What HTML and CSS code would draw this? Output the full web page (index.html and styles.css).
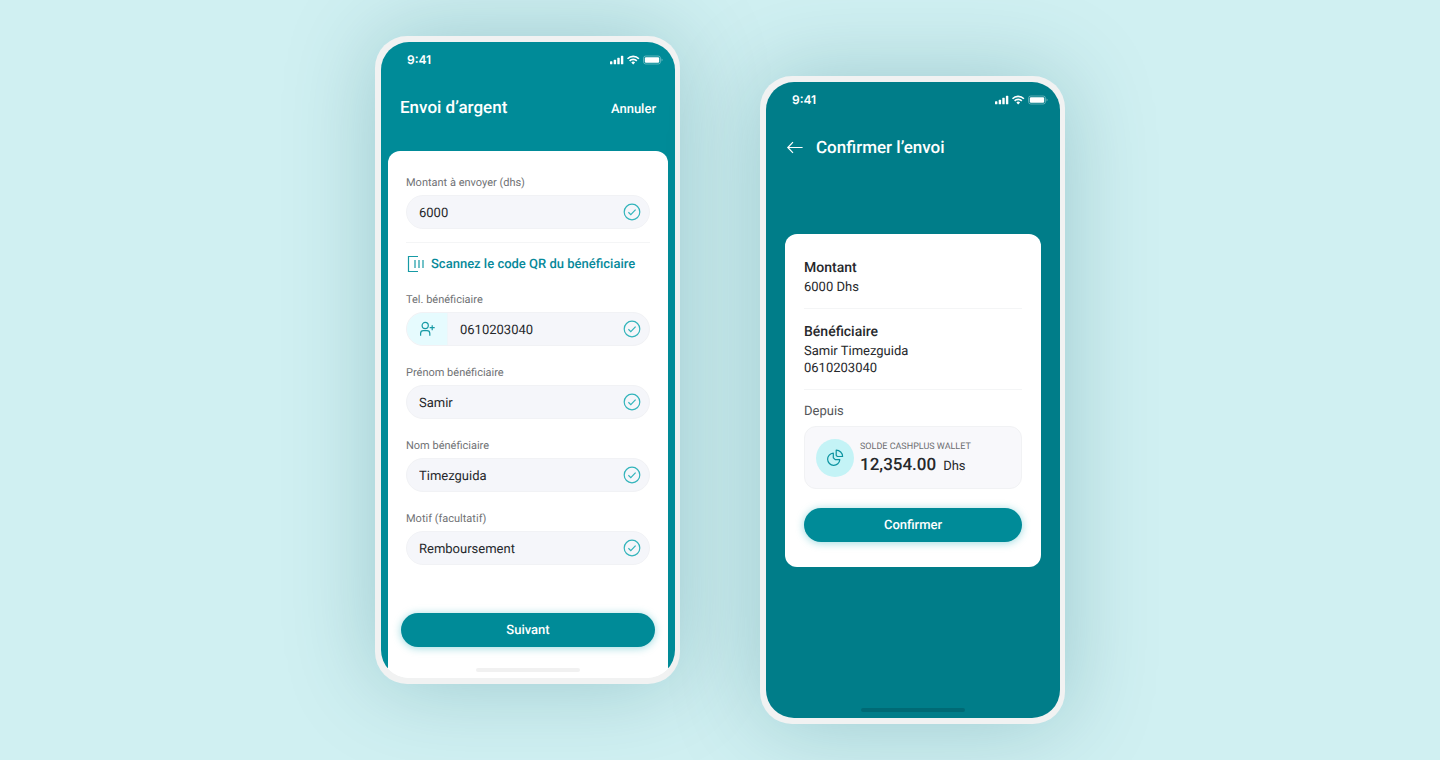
FILE: index.html
```html
<!DOCTYPE html>
<html lang="fr">
<head>
<meta charset="utf-8">
<meta name="viewport" content="width=device-width, initial-scale=1">
<title>Envoi d’argent</title>
<link rel="stylesheet" href="styles.css">
</head>
<body>
<svg class="sprite" aria-hidden="true">
  <symbol id="check" viewBox="0 0 18 18"><circle cx="9" cy="9" r="7.8"/><path d="M5.4 9.3l2.4 2.3 4.8-5"/></symbol>
  <symbol id="status" viewBox="0 0 54 12">
    <g fill="#fff"><rect x="1" y="7.3" width="2.4" height="3" rx=".6"/><rect x="4.7" y="5.8" width="2.4" height="4.5" rx=".6"/><rect x="8.3" y="3.8" width="2.4" height="6.5" rx=".6"/><rect x="11.9" y="1.8" width="2.4" height="8.5" rx=".6"/></g>
    <g fill="none" stroke="#fff" stroke-width="1.6"><path d="M18.5 4.7a8.1 8.1 0 0 1 11.4 0"/><path d="M20.6 6.9a5.1 5.1 0 0 1 7.2 0"/></g>
    <path d="M22.3 8.5a2.8 2.8 0 0 1 3.8 0l-1.9 2z" fill="#fff"/>
    <rect x="34.5" y="2" width="17" height="8" rx="2.3" fill="none" stroke="#fff" stroke-opacity=".35"/>
    <rect x="35.8" y="3.2" width="14.4" height="5.6" rx="1.2" fill="#fff"/><path d="M52.6 4.6c1.2.4 1.2 2.4 0 2.8z" fill="#fff" fill-opacity=".5"/>
  </symbol>
</svg>
<main class="stage">
  <section class="phone">
    <div class="screen screen-send">
      <div class="statusbar"><span>9:41</span><svg class="status-icons"><use href="#status"/></svg></div>
      <header class="header"><h1>Envoi d’argent</h1><button class="cancel" type="button">Annuler</button></header>
      <form class="sheet">
        <div class="fields">
          <div class="field"><label for="amount">Montant à envoyer (dhs)</label>
            <div class="control"><input id="amount" value="6000"><svg class="check"><use href="#check"/></svg></div></div>
          <hr class="rule">
          <button class="scan" type="button">
            <svg class="scan-icon" viewBox="0 0 18 18"><path d="M12 1.5H2.5v15H12M9 5v8M13 5v8M17 5v8"/></svg>
            Scannez le code QR du bénéficiaire</button>
          <div class="field"><label for="phone">Tel. bénéficiaire</label>
            <div class="control"><button class="contact" type="button" aria-label="Choisir un contact"><svg viewBox="0 0 18 18"><circle cx="7.2" cy="5.5" r="3.1"/><path d="M2.6 15.7v-2.2a2.8 2.8 0 0 1 2.8-2.8H9a2.8 2.8 0 0 1 2.8 2.8v2.2M14.2 5.2v5M11.7 7.7h5"/></svg></button><input id="phone" type="tel" value="0610203040"><svg class="check"><use href="#check"/></svg></div></div>
          <div class="field"><label for="first">Prénom bénéficiaire</label>
            <div class="control"><input id="first" value="Samir"><svg class="check"><use href="#check"/></svg></div></div>
          <div class="field"><label for="last">Nom bénéficiaire</label>
            <div class="control"><input id="last" value="Timezguida"><svg class="check"><use href="#check"/></svg></div></div>
          <div class="field"><label for="reason">Motif (facultatif)</label>
            <div class="control"><input id="reason" value="Remboursement"><svg class="check"><use href="#check"/></svg></div></div>
        </div>
        <div class="actions"><button class="primary" type="button">Suivant</button></div>
        <div class="homebar"></div>
      </form>
    </div>
  </section>
  <section class="phone phone-low">
    <div class="screen screen-confirm">
      <div class="statusbar"><span>9:41</span><svg class="status-icons"><use href="#status"/></svg></div>
      <header class="header header-back"><button class="back" type="button" aria-label="Retour"><svg viewBox="0 0 18 18"><path d="M16.6 8.5H2M7 3.1L1.8 8.5 7 13.9"/></svg></button><h1>Confirmer l’envoi</h1></header>
      <div class="card">
        <h2>Montant</h2>
        <p>6000 Dhs</p>
        <hr class="rule">
        <h2>Bénéficiaire</h2>
        <p>Samir Timezguida<br>0610203040</p>
        <hr class="rule">
        <p class="from">Depuis</p>
        <div class="wallet">
          <span class="wallet-icon"><svg viewBox="0 0 18 18"><path d="M7.3 4.1a6.1 6.1 0 1 0 6.5 6.5H9.2L7.3 8.8z"/><path d="M10.2 1.2v5.2l1.2 1.1h5.2a6.4 6.4 0 0 0-6.4-6.3z"/></svg></span>
          <div class="wallet-text"><div class="wallet-name">SOLDE CASHPLUS WALLET</div><div class="balance"><strong>12,354.00</strong><span>Dhs</span></div></div>
        </div>
        <button class="primary" type="button">Confirmer</button>
      </div>
      <div class="homebar"></div>
    </div>
  </section>
</main>
</body>
</html>
```
FILE: styles.css
```css
* { box-sizing: border-box; }
body { margin: 0; min-height: 100vh; background: #d0f0f2; color: #26282b; font-family: Roboto, "Liberation Sans", sans-serif; font-size: 13px; text-rendering: geometricPrecision; }
h1, h2, p { margin: 0; }
button { font: inherit; color: inherit; border: 0; padding: 0; background: none; text-rendering: inherit; }
.sprite { position: absolute; width: 0; height: 0; }
.stage { display: flex; justify-content: center; align-items: flex-start; gap: 80px; padding: 36px 20px; min-height: 100vh; overflow: hidden; }
.phone { flex: 0 1 305px; min-width: 0; padding: 6px 5px 6px 6px; border-radius: 32px; background: #f1f2f2; box-shadow: 0 0 90px rgba(0, 88, 100, .25); }
.phone-low { margin-top: 40px; }
.screen { display: flex; flex-direction: column; min-height: 636px; border-radius: 28px; overflow: hidden; }
.screen-send { background: linear-gradient(#008b98 calc(100% - 10px), #fff 0); padding: 0 7px; }
.screen-confirm { background: #007d89; padding: 0 19px; }
.statusbar { display: flex; justify-content: space-between; align-items: center; padding-top: 9px; height: 27px; color: #fff; font: 600 12px/16px Inter, sans-serif; }
.screen-send .statusbar { padding-left: 19px; padding-right: 5px; }
.screen-confirm .statusbar { padding-left: 7px; margin-right: -7px; }
.status-icons { width: 54px; height: 12px; }
.header { display: flex; justify-content: space-between; align-items: center; height: 24px; margin: 27px 12px 31px; color: #fff; }
.header h1 { font-size: 17px; line-height: 24px; font-weight: 500; }
.cancel { font-weight: 500; padding-top: 2px; }
.header-back { justify-content: flex-start; gap: 12px; margin: 27px 1px 74px; }
.back { display: flex; }
.back svg { width: 18px; height: 18px; fill: none; stroke: #fff; stroke-width: 1.2; }
.sheet { display: flex; flex-direction: column; flex: 1; background: #fff; border-radius: 12px 12px 0 0; }
.fields { display: flex; flex-direction: column; padding: 24px 18px 0; }
.field { display: flex; flex-direction: column; gap: 4px; }
.field + .field { margin-top: 19px; }
.field label { color: #707275; font-size: 11px; line-height: 16px; }
.control { display: flex; align-items: center; height: 34px; border: 1px solid #f1f2f5; border-radius: 17px; background: #f5f6fa; overflow: hidden; padding-right: 8px; }
.control input { flex: 1; min-width: 0; border: 0; outline: 0; padding: 2px 12px 0; background: none; color: #26282b; font: 13px Roboto, "Liberation Sans", sans-serif; text-rendering: inherit; }
.check { flex: none; width: 18px; height: 18px; fill: none; stroke: #32b4bb; stroke-width: 1.2; }
.contact { display: flex; align-items: center; justify-content: center; align-self: stretch; width: 41px; background: #e6fbfe; border-right: 1px solid #eef6f9; }
.contact svg { width: 18px; height: 18px; fill: none; stroke: #179aa5; stroke-width: 1.2; }
.rule { width: 100%; height: 1px; margin: 0; border: 0; background: #f4f5f6; }
.fields .rule { margin: 13px 0 12px; }
.scan { display: flex; align-items: center; gap: 7px; height: 18px; margin-bottom: 19px; color: #07899a; font-weight: 500; white-space: nowrap; }
.scan-icon { flex: none; width: 18px; height: 18px; fill: none; stroke: #179aa5; stroke-width: 1.2; }
.actions { margin-top: auto; padding: 0 13px; }
.primary { display: block; width: 100%; height: 34px; border-radius: 17px; background: #008b98; color: #fff; font-weight: 500; box-shadow: 0 1px 9px rgba(0, 160, 175, .4); }
.homebar { align-self: center; width: 104px; height: 4px; border-radius: 2px; background: #f1f1f1; margin: 21px 0 6px; }
.screen-confirm .homebar { margin-top: auto; background: #006a75; }
.card { padding: 24px 19px 25px; border-radius: 12px; background: #fff; }
.card h2 { font-size: 14px; line-height: 20px; font-weight: 500; }
.card p { line-height: 17px; padding-top: 1px; }
.card .rule { margin: 12px 0 13px; }
.card .from { color: #55575a; padding-top: 0; }
.wallet { display: flex; align-items: center; gap: 6px; height: 63px; margin: 6px 0 19px; padding: 0 11px; border: 1px solid #f1f2f4; border-radius: 12px; background: #f8f8fb; }
.wallet-icon { display: flex; align-items: center; justify-content: center; width: 38px; height: 38px; border-radius: 50%; background: #c4f3f6; }
.wallet-icon svg { width: 18px; height: 18px; fill: none; stroke: #0b93a0; stroke-width: 1.2; stroke-linejoin: round; }
.wallet-text { padding-top: 2px; }
.wallet-name { color: #6b6d70; font-size: 9px; line-height: 14px; }
.balance { display: flex; align-items: baseline; gap: 7px; line-height: 22px; }
.balance strong { font-size: 17px; font-weight: 500; }
```
